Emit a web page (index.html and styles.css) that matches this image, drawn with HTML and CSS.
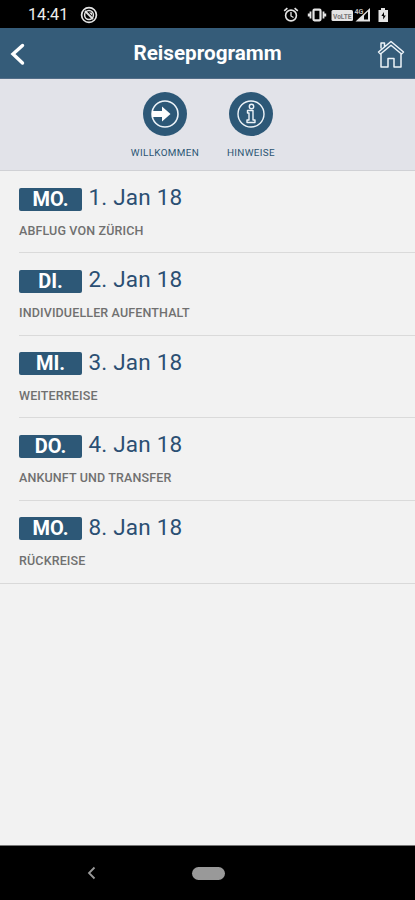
FILE: index.html
```html
<!DOCTYPE html>
<html lang="de">
<head>
<meta charset="utf-8">
<title>Reiseprogramm</title>
<link rel="stylesheet" href="styles.css">
</head>
<body>
<div class="status">
  <span class="clock">14:41</span>
  <svg class="dnd" width="18" height="18" viewBox="0 0 18 18" fill="none" stroke="#e4e4e4"><circle cx="9" cy="9" r="7.4" stroke-width="1.7"/><circle cx="9" cy="9" r="4.4" stroke-width="1.5"/><path d="M5 5l8 8" stroke-width="1.8"/><path d="M9 6.5l3 3V6.5z" fill="#e4e4e4" stroke="none"/></svg>
  <svg class="status-icons" width="108" height="18" viewBox="0 0 108 18" fill="none" stroke="#e4e4e4">
    <circle cx="8" cy="9.5" r="5.4" stroke-width="1.6"/><path d="M8 6v4l2.500 1.500" stroke-width="1.300"/><path d="M1.200 4.800l3.200-2.600M14.800 4.800l-3.200-2.600" stroke-width="1.700"/>
    <rect x="30.500" y="3.700" width="7" height="10.600" rx="1" stroke-width="2.200"/><path d="M27.500 5.500v7M25.700 7.500v3M40.500 5.500v7M42.300 7.500v3" stroke-width="1.800"/>
    <rect x="48.500" y="4" width="21.500" height="11" rx="1.500" fill="#e4e4e4" stroke="none"/>
    <text class="volte" x="50" y="12.700" textLength="18.500" lengthAdjust="spacingAndGlyphs">VoLTE</text>
    <path d="M72.500 15.500L87 2v13.500z" fill="#e4e4e4" stroke="none"/><path d="M81 13.500V9.500l4-4v8z" fill="#000" stroke="none"/>
    <text class="fourg" x="71.500" y="7.800" textLength="9" lengthAdjust="spacingAndGlyphs">4G</text>
    <path d="M95.500 4H98V2h4v2h3v12h-9.500z" fill="#e4e4e4" stroke="none"/><path d="M101 6l-2.600 4h1.800v3.500l2.600-4H101z" fill="#000" stroke="none"/>
  </svg>
</div>
<header class="bar">
  <svg width="16" height="24" viewBox="0 0 16 24" fill="none" stroke="#fff" stroke-width="3.400" stroke-linecap="round"><path d="M13.500 3.500L4 12l9.500 9"/></svg>
  <h1>Reiseprogramm</h1>
  <svg width="28" height="30" viewBox="0 0 28 30" fill="none" stroke="#edf3f8" stroke-width="1.500" stroke-linejoin="round"><path d="M1.500 13L14 2.500 26.500 13l-2 2L14 6.200 3.500 15zM4 9.500V4h3.500v3.500M4 15v13h7V19.500h6V28h7V15"/></svg>
</header>
<nav class="tabs">
  <a class="tab">
    <svg width="44" height="44" viewBox="0 0 44 44"><circle cx="22" cy="22" r="22" fill="#2d5877"/><circle cx="22" cy="22" r="13" fill="none" stroke="#edf3f8" stroke-width="1.600"/><path d="M9 19h10v-4.500l8.500 7.500-8.500 7.500V25H9z" fill="#fff"/></svg>
    <span>WILLKOMMEN</span>
  </a>
  <a class="tab">
    <svg width="44" height="44" viewBox="0 0 44 44"><circle cx="22" cy="22" r="22" fill="#2d5877"/><g fill="none" stroke="#edf3f8" stroke-width="1.400"><circle cx="22" cy="22" r="13"/><circle cx="22.500" cy="14.500" r="2.200"/><path d="M18.500 18.500H24v9.500h2v2.500h-8V28h2v-7h-1.500z" stroke-linejoin="round"/></g></svg>
    <span>HINWEISE</span>
  </a>
</nav>
<main>
  <section class="day"><div class="line"><b>MO.</b><time>1. Jan 18</time></div><p>ABFLUG VON ZÜRICH</p></section>
  <section class="day"><div class="line"><b>DI.</b><time>2. Jan 18</time></div><p>INDIVIDUELLER AUFENTHALT</p></section>
  <section class="day"><div class="line"><b>MI.</b><time>3. Jan 18</time></div><p>WEITERREISE</p></section>
  <section class="day"><div class="line"><b>DO.</b><time>4. Jan 18</time></div><p>ANKUNFT UND TRANSFER</p></section>
  <section class="day"><div class="line"><b>MO.</b><time>8. Jan 18</time></div><p>RÜCKREISE</p></section>
</main>
<footer>
  <svg width="10" height="14" viewBox="0 0 10 14" fill="none" stroke="#999" stroke-width="1.800"><path d="M7.500 1.500L2 7l5.500 5.500"/></svg>
  <span class="pill"></span>
</footer>
</body>
</html>
```

FILE: styles.css
```css
* { box-sizing: border-box; }
body {
  margin: 0;
  height: 900px;
  display: flex;
  flex-direction: column;
  background: #f2f2f2;
  font-family: Roboto, "Liberation Sans", sans-serif;
  overflow: hidden;
}
svg { display: block; flex: none; }
.status {
  height: 28px;
  background: #000;
  display: flex;
  align-items: center;
  padding: 1px 24px 0 28px;
}
.clock { width: 40px; font-size: 16.2px; line-height: 20px; color: #eee; white-space: nowrap; }
.dnd { margin-left: 12px; }
.status-icons { margin-left: auto; }
.volte { font-size: 8px; font-weight: 700; fill: #777; stroke: none; }
.fourg { font-size: 7px; font-weight: 700; fill: #bbb; stroke: none; }
.bar {
  height: 51px;
  background: #355c79;
  border-bottom: 1px solid #526d88;
  display: flex;
  align-items: center;
  padding: 1px 10px 0 9px;
}
.bar h1 {
  flex: 1;
  margin: -2px 0 0;
  padding-left: 13px;
  text-align: center;
  color: #fff;
  font-size: 20.7px;
  line-height: 28px;
  font-weight: 700;
}
.tabs {
  height: 92px;
  background: #e2e3e9;
  border-bottom: 1px solid #d0d1d5;
  padding: 13px 0 0 122px;
  display: flex;
}
.tab { width: 86px; display: flex; flex-direction: column; align-items: center; }
.tab span {
  margin-top: 11px;
  font-size: 9.9px;
  line-height: 12px;
  letter-spacing: .35px;
  color: #2b5573;
  white-space: nowrap;
}
main { border-bottom: 1px solid #d9d9d9; }
.day { height: 82.4px; margin-left: 19px; padding-top: 14px; border-bottom: 1px solid #dadada; }
.day:last-child { border-bottom: 0; }
.line { display: flex; align-items: center; height: 26px; }
.line b {
  width: 63px;
  height: 23px;
  margin-top: 2px;
  border-radius: 2px;
  background: #2d5877;
  color: #fff;
  font-size: 20px;
  line-height: 23px;
  text-align: center;
}
.line time {
  margin: -2px 0 0 6.5px;
  font-size: 22.5px;
  line-height: 26px;
  letter-spacing: .2px;
  color: #2b4f73;
  white-space: nowrap;
}
.day p {
  margin: 12px 0 0;
  font-size: 12.5px;
  line-height: 16px;
  letter-spacing: .14px;
  color: #707070;
  font-weight: 500;
  white-space: nowrap;
}
footer {
  height: 55px;
  margin-top: auto;
  background: #000;
  border-top: 1px solid #777;
  display: flex;
  align-items: center;
  padding-left: 87px;
}
.pill { width: 33px; height: 13px; margin-left: 95px; border-radius: 7px; background: #999; }
```
